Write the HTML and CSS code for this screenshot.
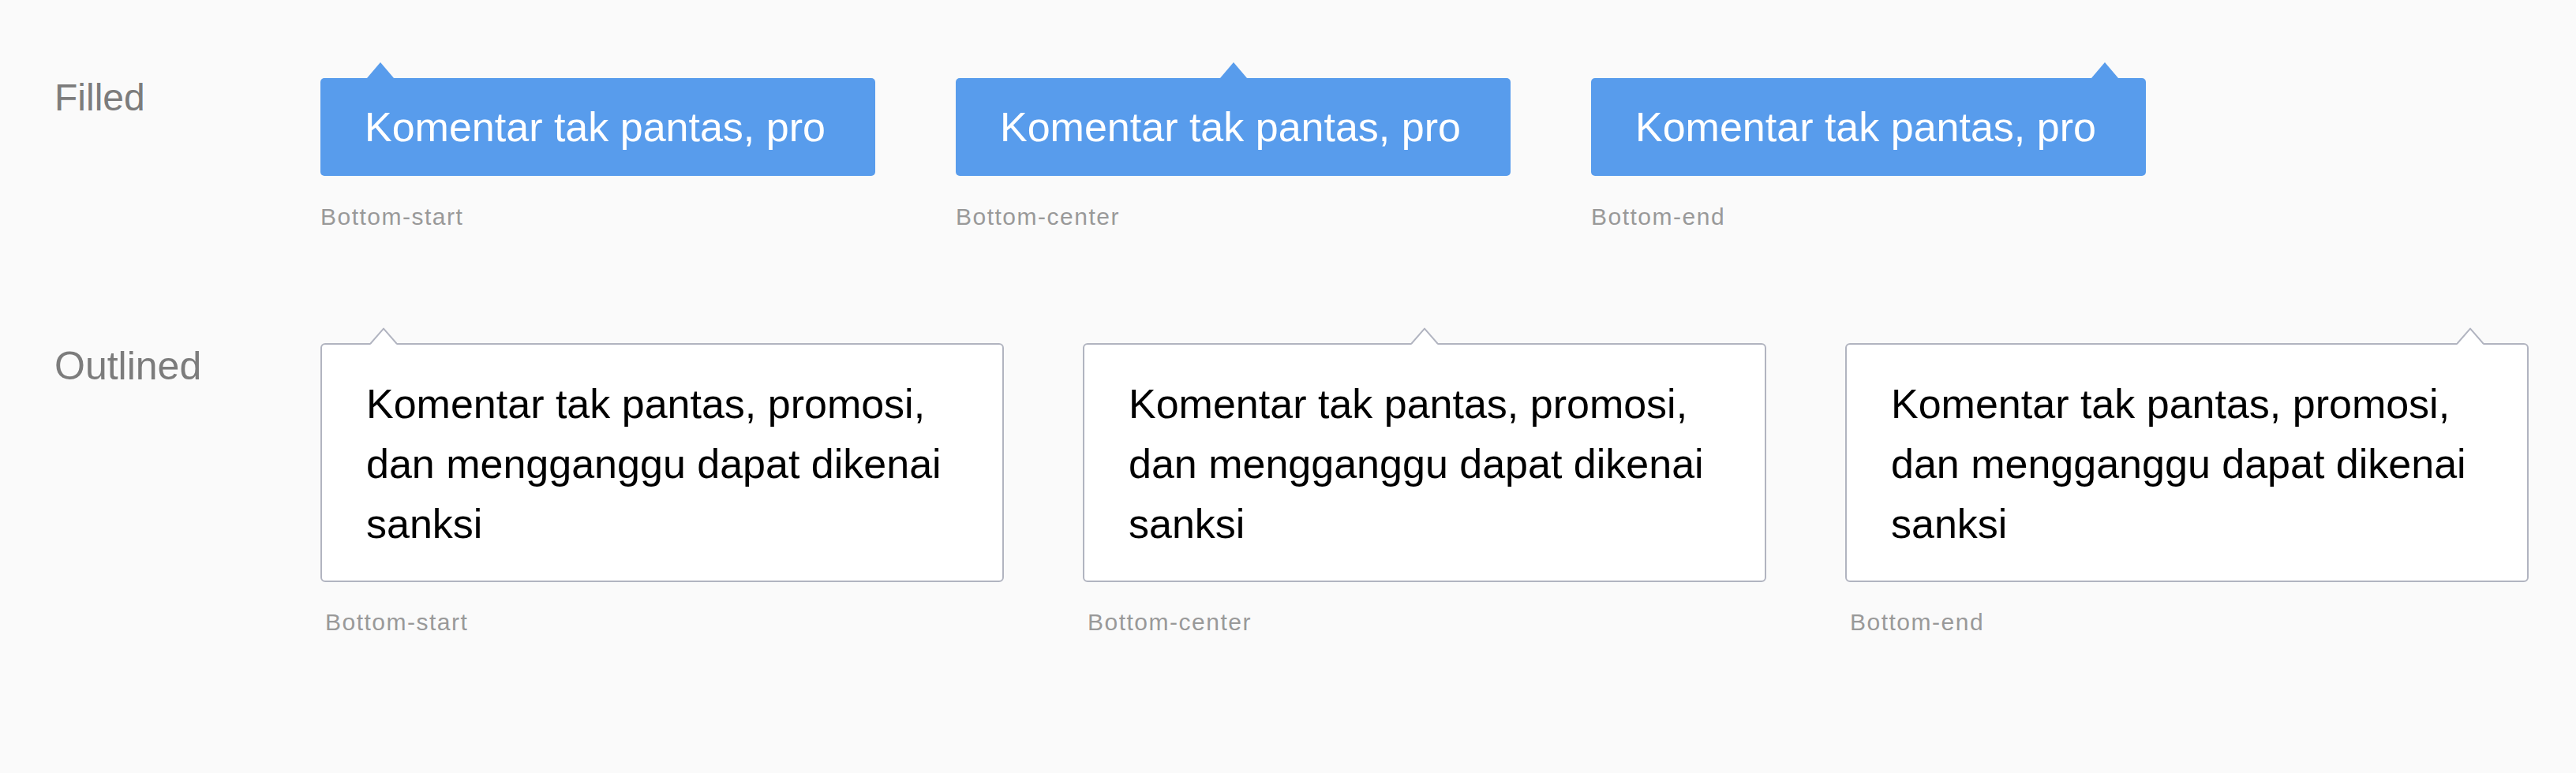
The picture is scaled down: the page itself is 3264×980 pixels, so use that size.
FILE: index.html
```html
<!DOCTYPE html>
<html lang="id">
<head>
<meta charset="utf-8">
<title>Tooltip</title>
<link rel="stylesheet" href="styles.css">
</head>
<body>
<main class="page">
  <section class="row row-filled">
    <h2 class="row-label label-filled">Filled</h2>
    <div class="items items-filled">
      <div class="item">
        <div class="tip tip-filled arrow-start">
          <svg class="arrow" width="34" height="20" viewBox="0 0 34 20"><polygon points="0,20 17,0 34,20" fill="#589cec"/></svg>
          <span class="tip-text">Komentar tak pantas, pro</span>
        </div>
        <p class="caption">Bottom-start</p>
      </div>
      <div class="item">
        <div class="tip tip-filled arrow-center">
          <svg class="arrow" width="34" height="20" viewBox="0 0 34 20"><polygon points="0,20 17,0 34,20" fill="#589cec"/></svg>
          <span class="tip-text">Komentar tak pantas, pro</span>
        </div>
        <p class="caption">Bottom-center</p>
      </div>
      <div class="item">
        <div class="tip tip-filled arrow-end">
          <svg class="arrow" width="34" height="20" viewBox="0 0 34 20"><polygon points="0,20 17,0 34,20" fill="#589cec"/></svg>
          <span class="tip-text">Komentar tak pantas, pro</span>
        </div>
        <p class="caption">Bottom-end</p>
      </div>
    </div>
  </section>

  <section class="row row-outlined">
    <h2 class="row-label label-outlined">Outlined</h2>
    <div class="items items-outlined">
      <div class="item">
        <div class="tip tip-outlined arrow-start">
          <svg class="arrow" width="34" height="22" viewBox="0 0 34 22"><polygon points="0,22 17,2 34,22" fill="#ffffff"/><polyline points="0,21 17,1.6 34,21" fill="none" stroke="#b1b4c0" stroke-width="2" stroke-linejoin="round"/></svg>
          <p class="tip-text">Komentar tak pantas, promosi, dan mengganggu dapat dikenai sanksi</p>
        </div>
        <p class="caption caption-outlined">Bottom-start</p>
      </div>
      <div class="item">
        <div class="tip tip-outlined arrow-center">
          <svg class="arrow" width="34" height="22" viewBox="0 0 34 22"><polygon points="0,22 17,2 34,22" fill="#ffffff"/><polyline points="0,21 17,1.6 34,21" fill="none" stroke="#b1b4c0" stroke-width="2" stroke-linejoin="round"/></svg>
          <p class="tip-text">Komentar tak pantas, promosi, dan mengganggu dapat dikenai sanksi</p>
        </div>
        <p class="caption caption-outlined">Bottom-center</p>
      </div>
      <div class="item">
        <div class="tip tip-outlined arrow-end">
          <svg class="arrow" width="34" height="22" viewBox="0 0 34 22"><polygon points="0,22 17,2 34,22" fill="#ffffff"/><polyline points="0,21 17,1.6 34,21" fill="none" stroke="#b1b4c0" stroke-width="2" stroke-linejoin="round"/></svg>
          <p class="tip-text">Komentar tak pantas, promosi, dan mengganggu dapat dikenai sanksi</p>
        </div>
        <p class="caption caption-outlined">Bottom-end</p>
      </div>
    </div>
  </section>
</main>
</body>
</html>
```

FILE: styles.css
```css
html, body {
  margin: 0;
  padding: 0;
  background: #fafafa;
}

body {
  font-family: "Liberation Sans", Arial, sans-serif;
  width: 3264px;
  height: 980px;
  overflow: hidden;
}

.page {
  padding: 79px 0 0 69px;
  display: flex;
  flex-direction: column;
  gap: 120px;
}

.row {
  display: grid;
  grid-template-columns: 337px auto;
  align-items: start;
}

.row-label {
  margin: 0;
  font-weight: 400;
  font-size: 48px;
  line-height: 48px;
  color: #7c7c7c;
}

.label-filled {
  padding-top: 21px;
}

.label-outlined {
  padding-top: 24px;
  font-size: 50px;
  line-height: 50px;
}

.items {
  display: flex;
  align-items: flex-start;
}

.items-filled {
  gap: 102px;
}

.items-outlined {
  gap: 100px;
}

.item {
  display: flex;
  flex-direction: column;
}

.tip {
  position: relative;
  box-sizing: border-box;
  margin-top: 20px;
}

.arrow {
  position: absolute;
  display: block;
}

.tip-filled {
  width: 703px;
  height: 124px;
  padding: 0 56px;
  background: #589cec;
  border-radius: 5px;
  display: flex;
  align-items: center;
}

.tip-filled .arrow {
  top: -20px;
}

.tip-filled .tip-text {
  color: #ffffff;
  font-size: 52px;
  line-height: 52px;
  white-space: nowrap;
}

.tip-filled.arrow-start .arrow { left: 59px; }
.tip-filled.arrow-center .arrow { left: calc(50% - 17px); }
.tip-filled.arrow-end .arrow { right: 35px; }

.tip-outlined {
  width: 866px;
  background: #ffffff;
  border: 2px solid #b1b4c0;
  border-radius: 6px;
  padding: 37px 56px 34px;
  margin-top: 20px;
}

.tip-outlined .arrow {
  top: -22px;
}

.tip-outlined.arrow-start .arrow { left: 61px; }
.tip-outlined.arrow-center .arrow { left: calc(50% - 17px); }
.tip-outlined.arrow-end .arrow { right: 55px; }

.tip-outlined .tip-text {
  margin: 0;
  color: #000000;
  font-size: 52px;
  line-height: 76px;
}

.caption {
  margin: 32px 0 0;
  font-size: 30px;
  line-height: 40px;
  letter-spacing: 1.5px;
  color: #999999;
}

.caption-outlined {
  margin-top: 31px;
  padding-left: 6px;
}
```
